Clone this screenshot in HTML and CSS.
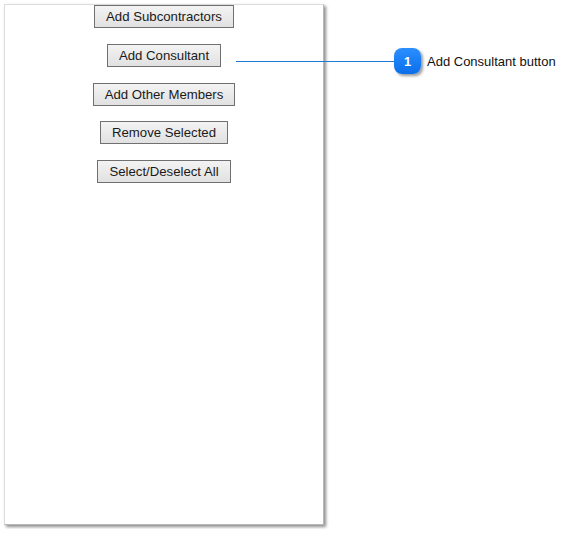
FILE: index.html
```html
<!DOCTYPE html>
<html lang="en">
<head>
  <meta charset="UTF-8">
  <title>Add Consultant</title>
  <link rel="stylesheet" href="styles.css">
</head>
<body>
  <div class="panel">
    <div class="actions">
      <button class="action-btn">Add Subcontractors</button>
      <button class="action-btn">Add Consultant</button>
      <button class="action-btn">Add Other Members</button>
      <button class="action-btn">Remove Selected</button>
      <button class="action-btn">Select/Deselect All</button>
    </div>
  </div>

  <!-- callout for the Add Consultant button -->
  <div class="callout">
    <div class="callout-line"></div>
    <div class="badge">1</div>
    <span class="callout-text">Add Consultant button</span>
  </div>
</body>
</html>
```

FILE: styles.css
```css
body {
  margin: 0;
  padding: 4px;
  font-family: 'Liberation Sans', Arial, sans-serif;
  background-color: #ffffff;
}

.panel {
  width: 318px;
  height: 519px;
  background: white;
  border: 1px solid #dcdcdc;
  border-right-color: #b8b8b8;
  border-bottom-color: #b8b8b8;
  box-shadow: 2px 2px 3px rgba(0,0,0,0.45);
}

.actions {
  display: flex;
  flex-direction: column;
  align-items: center;
  gap: 15.75px;
}

.action-btn {
  height: 23px;
  padding: 0 11px;
  font-family: 'Liberation Sans', Arial, sans-serif;
  font-size: 13.2px;
  color: #1a1a1a;
  background: linear-gradient(#f3f3f3, #e1e1e1);
  border: 1px solid #707070;
  border-radius: 0;
}

/* callout */
.callout {
  position: absolute;
  left: 236px;
  top: 48px;
  display: flex;
  align-items: center;
}

.callout-line {
  width: 158px;
  height: 1px;
  background-color: #1e7ad6;
}

.badge {
  width: 27px;
  height: 26px;
  border-radius: 8px;
  background: linear-gradient(#2b8fff, #0a6fea);
  color: white;
  font-weight: bold;
  font-size: 13px;
  display: flex;
  align-items: center;
  justify-content: center;
  box-shadow: 2px 2px 3px rgba(0,0,0,0.4);
}

.callout-text {
  margin-left: 6px;
  font-size: 13px;
  color: #111;
}
```
